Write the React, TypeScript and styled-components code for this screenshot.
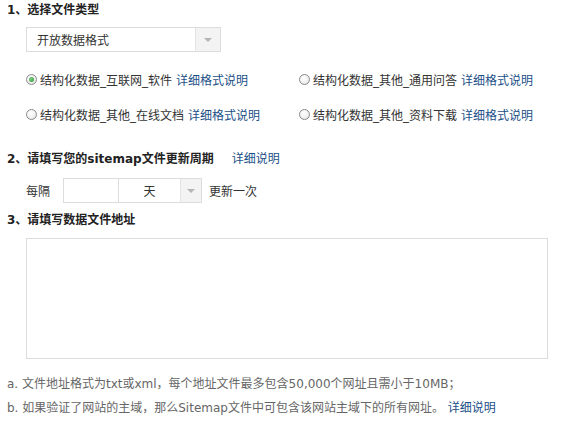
import React from "react";
import styled, { createGlobalStyle } from "styled-components";

const Global = createGlobalStyle`
  html, body { margin: 0; padding: 0; background: #fff; }
  body { font-family: "DejaVu Sans", "Noto Sans CJK SC", sans-serif; font-size: 12px; color: #333; }
`;

const Page = styled.div`
  display: flex;
  flex-direction: column;
  width: 575px;
`;

const Heading = styled.div<{ $mt: number }>`
  margin-top: ${(p) => p.$mt}px;
  padding-left: 7px;
  height: 20px;
  line-height: 20px;
  font-weight: bold;
  color: #222;
  display: flex;
  align-items: center;
  white-space: nowrap;
`;

const Link = styled.a`
  color: #1b4f87;
  text-decoration: none;
  font-weight: normal;
`;

const HeadLink = styled(Link)`
  margin-left: 18px;
`;

const Select = styled.div<{ $mt?: number; $w: number }>`
  margin-top: ${(p) => p.$mt ?? 0}px;
  width: ${(p) => p.$w}px;
  height: 25px;
  box-sizing: border-box;
  border: 1px solid #dcdcdc;
  background: #fff;
  display: flex;
  align-items: stretch;
`;

const SelectText = styled.div<{ $center?: boolean }>`
  flex: 1;
  display: flex;
  align-items: center;
  justify-content: ${(p) => (p.$center ? "center" : "flex-start")};
  padding-left: ${(p) => (p.$center ? 0 : 10)}px;
  color: #333;
`;

const SelectBtn = styled.div<{ $w: number }>`
  width: ${(p) => p.$w}px;
  border-left: 1px solid #e3e3e3;
  background: #f3f3f3;
  display: flex;
  align-items: center;
  justify-content: center;
`;

const Arrow = styled.span`
  width: 0;
  height: 0;
  border-left: 4px solid transparent;
  border-right: 4px solid transparent;
  border-top: 4px solid #b5b5b5;
`;

const Indent = styled.div`
  padding-left: 26px;
`;

const RadioGrid = styled.div`
  margin-top: 17px;
  display: grid;
  grid-template-columns: 273px auto;
  row-gap: 15px;
`;

const RadioItem = styled.label`
  display: flex;
  align-items: center;
  height: 20px;
  white-space: nowrap;
`;

const Circle = styled.span<{ $on?: boolean }>`
  width: 11px;
  height: 11px;
  box-sizing: border-box;
  border-radius: 50%;
  border: 1px solid #8a8a8a;
  background: radial-gradient(circle at 40% 35%, #fff 0%, #f3f3f3 50%, #dadada 100%);
  display: flex;
  align-items: center;
  justify-content: center;
  margin-right: 3px;
  &::after {
    content: "";
    display: ${(p) => (p.$on ? "block" : "none")};
    width: 5px;
    height: 5px;
    border-radius: 50%;
    background: radial-gradient(circle at 40% 40%, #7ed07e, #2f8f2f);
  }
`;

const Label = styled.span`
  margin-right: 4px;
`;

const PeriodRow = styled.div`
  margin-top: 9px;
  padding-left: 26px;
  display: flex;
  align-items: center;
  height: 25px;
`;

const Text = styled.span<{ $mr?: number; $ml?: number }>`
  margin-right: ${(p) => p.$mr ?? 0}px;
  margin-left: ${(p) => p.$ml ?? 0}px;
`;

const NumInput = styled.div`
  width: 55px;
  height: 25px;
  box-sizing: border-box;
  border: 1px solid #dcdcdc;
  border-right: none;
`;

const TextArea = styled.div`
  margin-top: 8px;
  margin-left: 26px;
  width: 522px;
  height: 121px;
  box-sizing: border-box;
  border: 1px solid #dcdcdc;
`;

const Notes = styled.div`
  margin-top: 13px;
  padding-left: 7px;
  color: #666;
  line-height: 24px;
  white-space: nowrap;
`;

const radios = [
  { t: "结构化数据_互联网_软件", on: true },
  { t: "结构化数据_其他_通用问答" },
  { t: "结构化数据_其他_在线文档" },
  { t: "结构化数据_其他_资料下载" },
];

export default function App() {
  return (
    <Page>
      <Global />
      <Heading $mt={0}>1、选择文件类型</Heading>
      <Indent>
        <Select $mt={7} $w={195}>
          <SelectText>开放数据格式</SelectText>
          <SelectBtn $w={24}>
            <Arrow />
          </SelectBtn>
        </Select>
        <RadioGrid>
          {radios.map((r) => (
            <RadioItem key={r.t}>
              <Circle $on={r.on} />
              <Label>{r.t}</Label>
              <Link>详细格式说明</Link>
            </RadioItem>
          ))}
        </RadioGrid>
      </Indent>
      <Heading $mt={25}>
        2、请填写您的sitemap文件更新周期
        <HeadLink>详细说明</HeadLink>
      </Heading>
      <PeriodRow>
        <Text $mr={13}>每隔</Text>
        <NumInput />
        <Select $w={84}>
          <SelectText $center>天</SelectText>
          <SelectBtn $w={20}>
            <Arrow />
          </SelectBtn>
        </Select>
        <Text $ml={7}>更新一次</Text>
      </PeriodRow>
      <Heading $mt={7}>3、请填写数据文件地址</Heading>
      <TextArea />
      <Notes>
        <div>a. 文件地址格式为txt或xml，每个地址文件最多包含50,000个网址且需小于10MB；</div>
        <div>
          b. 如果验证了网站的主域，那么Sitemap文件中可包含该网站主域下的所有网址。 <Link>详细说明</Link>
        </div>
      </Notes>
    </Page>
  );
}
